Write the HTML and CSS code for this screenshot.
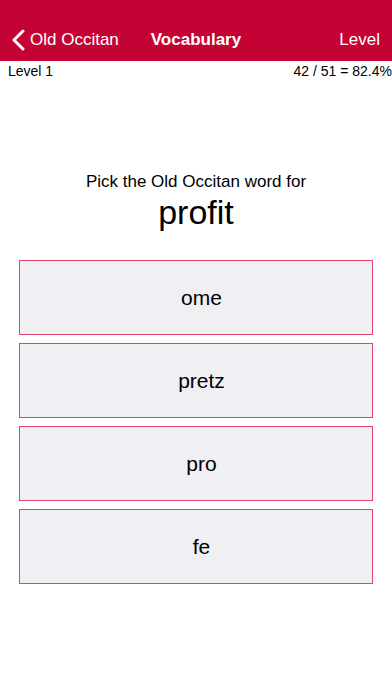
FILE: index.html
```html
<!DOCTYPE html>
<html lang="en">
<head>
    <meta charset="UTF-8">
    <meta name="viewport" content="width=device-width, initial-scale=1.0">
    <title>Vocabulary</title>
    <link rel="stylesheet" href="styles.css">
</head>
<body>
    <div class="nav">
        <div class="nav-back">
            <svg class="chevron" width="13" height="22" viewBox="0 0 13 22"><path d="M11 2 L2 11 L11 20" fill="none" stroke="#fff" stroke-width="3" stroke-linecap="round" stroke-linejoin="round"/></svg>
            <span>Old Occitan</span>
        </div>
        <div class="nav-title">Vocabulary</div>
        <div class="nav-right">Level</div>
    </div>
    <div class="status">
        <span>Level 1</span>
        <span>42 / 51 = 82.4%</span>
    </div>
    <div class="question">
        <p class="prompt">Pick the Old Occitan word for</p>
        <p class="word">profit</p>
    </div>
    <div class="answers">
        <button class="answer">ome</button>
        <button class="answer">pretz</button>
        <button class="answer">pro</button>
        <button class="answer">fe</button>
    </div>
</body>
</html>
```

FILE: styles.css
```css
body{font-family:"Liberation Sans",Arial,sans-serif;margin:0;padding:0;background:#fff;color:#000}
.nav{height:61px;background:#c40233;color:#fff;display:flex;align-items:center;justify-content:space-between;padding:19px 12px 0 12px;box-sizing:border-box;position:relative}
.nav-back{display:flex;align-items:center;font-size:17px;gap:5px}
.chevron{display:block}
.nav-title{position:absolute;left:0;right:0;top:19px;bottom:0;display:flex;align-items:center;justify-content:center;font-weight:bold;font-size:17px;pointer-events:none}
.nav-right{font-size:17px}
.status{display:flex;justify-content:space-between;font-size:14px;padding:2px 0 0 8px;height:17px}
.question{text-align:center;margin-top:92px}
.prompt{margin:0;font-size:17px;line-height:20px}
.word{margin:0;font-size:34px;line-height:40px}
.answers{display:flex;flex-direction:column;gap:8px;padding:0 19px 0 19px;margin-top:28px}
.answer{height:75px;background:#efeff4;border:1px solid #e0436c;font-family:inherit;font-size:21px;color:#000;padding:0 0 0 11px;width:100%}
```
